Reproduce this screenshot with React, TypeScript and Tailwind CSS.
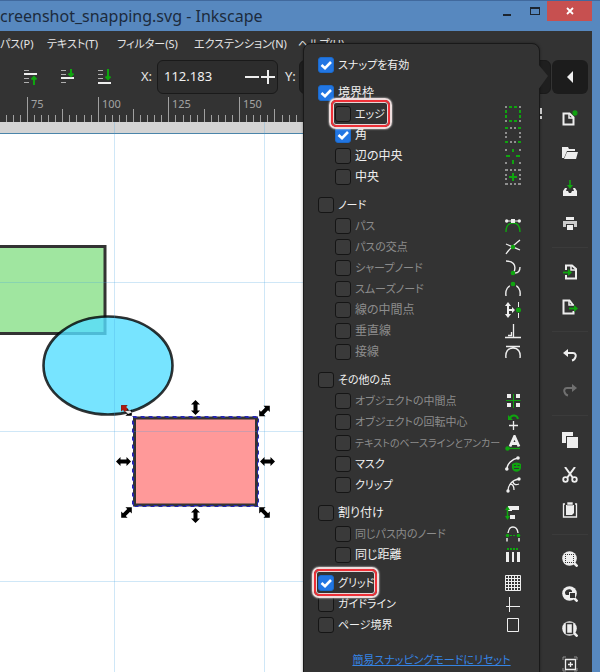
import React from "react";

const G = "#0fa50f";
const W = "#eeeeee";

function Svg({ children, label, className = "" }: { children: React.ReactNode; label?: string; className?: string }) {
  return (
    <svg width="16" height="16" viewBox="0 0 16 16" fill="none" aria-hidden={!label} aria-label={label} className={"shrink-0 " + className}>
      {children}
    </svg>
  );
}

const grey = "#8f8f8f";
const icons: Record<string, React.ReactNode> = {
  edge: (
    <>
      <path d="M4 1H7M9 1H12M4 15H7M9 15H12M1 4V7M1 9V12M15 4V7M15 9V12" stroke={G} strokeWidth="2" />
      <path d="M0 0h2v2H0zM14 0h2v2h-2zM0 14h2v2H0zM14 14h2v2h-2z" fill={grey} />
    </>
  ),
  corner: (
    <>
      <path d="M5 1H7M9 1H11M5 15H7M9 15H11M1 5V7M1 9V11M15 5V7M15 9V11" stroke={grey} strokeWidth="2" />
      <path d="M0 0h3v2H0zM13 0h3v2h-3zM0 14h3v2H0zM13 14h3v2h-3z" fill={G} />
    </>
  ),
  mid: (
    <>
      <path d="M8 1V4M8 12V16M1 8H5M11 8H15" stroke={G} strokeWidth="2" />
      <path d="M0 1h2v2H0zM14 1h2v2h-2zM0 14h2v2H0zM14 14h2v2h-2z" fill={grey} />
    </>
  ),
  center: (
    <>
      <path d="M8 4V12M4 8H12" stroke={G} strokeWidth="2" />
      <path d="M5 1H7M9 1H11M5 15H7M9 15H11M1 5V7M1 9V11M15 5V7M15 9V11" stroke={grey} strokeWidth="2" />
      <path d="M0 0h3v2H0zM13 0h3v2h-3zM0 14h3v2H0zM13 14h3v2h-3z" fill={grey} />
    </>
  ),
  path: (
    <>
      <path d="M1 14C1 9 3 5 8 5S15 9 15 14" stroke={G} strokeWidth="1.4" />
      <path d="M2 3H14" stroke={W} />
      <path d="M6 1h4v4H6z" fill={W} />
      <circle cx="1.7" cy="3" r="1.7" fill={W} /><circle cx="14.3" cy="3" r="1.7" fill={W} />
    </>
  ),
  cross: (
    <>
      <path d="M1 15C4 10 8 7 15 1M1 5C5 7 9 8 15 11" stroke={W} strokeWidth="1.3" />
      <circle cx="8" cy="8" r="2.2" fill={G} />
    </>
  ),
  cusp: (
    <>
      <path d="M1 1C7 1 12 4 9 12M10 13C14 13 15 10 15 7" stroke={W} strokeWidth="1.4" />
      <circle cx="8" cy="13" r="2.3" fill={G} />
    </>
  ),
  smooth: (
    <>
      <path d="M1 15C0 9 3 4 8 4S16 9 15 15" stroke={W} strokeWidth="1.4" />
      <circle cx="8" cy="4" r="3.4" fill="#333" />
      <circle cx="8" cy="3" r="2.3" fill={G} />
    </>
  ),
  lineMid: (
    <>
      <path d="M3 2V14M3 8H9" stroke={W} strokeWidth="2" />
      <path d="M0 4L3 0L6 4zM0 12L3 16L6 12zM7 5L10 8L7 11z" fill={W} />
      <path d="M13.5 0V5M13.5 11V16" stroke={W} />
      <circle cx="13.5" cy="8" r="2.5" fill={G} />
    </>
  ),
  perp: <path d="M0 14.5H16M8.5 1V14M3 12.5H6.5V9" stroke={W} strokeWidth="1.3" />,
  tangent: <path d="M1 2.5H15M1 14C0 8 3 4 8 4S16 8 15 14" stroke={W} strokeWidth="1.4" />,
  objMid: (
    <>
      <path d="M2 1h4v4H2zM11 1h4v4h-4zM2 10h4v4H2zM11 10h4v4h-4z" fill={W} />
      <path d="M8.5 1V15M1 7.5H15.5" stroke={G} />
    </>
  ),
  rotate: (
    <>
      <path d="M8.5 7V16M4 11.5H13" stroke={W} strokeWidth="1.3" />
      <path d="M5 4C7 0 12 1 13 5" stroke={G} strokeWidth="2" />
      <path d="M3 1V6H8z" fill={G} />
    </>
  ),
  baseline: (
    <>
      <path d="M2 13.5H15" stroke={G} strokeWidth="1.3" />
      <circle cx="2.5" cy="13.5" r="2.2" fill={G} />
      <path d="M5 11.5L9.5 1.5L14 11.5M7 8.5H12" stroke={W} strokeWidth="2.8" />
    </>
  ),
  mask: (
    <>
      <path d="M2 13C2 8 7 3 13 2" stroke={W} strokeWidth="1.4" />
      <circle cx="1.8" cy="13" r="1.8" fill={W} /><circle cx="13" cy="2" r="1.8" fill={W} />
      <path d="M7 8C10 6 13 6 16 8V12C15 17 8 17 7 12z" fill={G} />
      <path d="M9 9.5H11M12.5 9.5H14.5M9 12.5H14" stroke="#333" strokeWidth="1" />
    </>
  ),
  clip: (
    <>
      <path d="M3 14C3 8 7 3 14 2M5 7C8 7 9 9 9 13M8 4C8 8 11 8 14 7" stroke={W} strokeWidth="1.3" />
      <circle cx="3" cy="14" r="1.7" fill={W} /><circle cx="14" cy="2" r="1.7" fill={W} />
    </>
  ),
  align: (
    <>
      <path d="M3 1H14V5H7V6H3zM5 10H10V14H5z" fill={W} />
      <path d="M2.5 4V13" stroke={G} strokeWidth="1.5" />
      <path d="M0 5L2.5 1L5 5zM0 11L2.5 15L5 11z" fill={G} />
    </>
  ),
  selfAlign: (
    <>
      <path d="M3 7C4 -1 12 -1 13 7" stroke={W} strokeWidth="1.4" />
      <path d="M2 12V15.5M14 12V15.5" stroke={W} strokeWidth="1.4" />
      <path d="M5 9.5H11" stroke={G} strokeDasharray="2 1" />
      <circle cx="2.5" cy="9.5" r="1.8" fill={G} /><circle cx="13.5" cy="9.5" r="1.8" fill={G} />
    </>
  ),
  dist: (
    <>
      <path d="M1 5h3v10H1zM7 5h2v10H7zM12 5h3v10h-3z" fill={W} />
      <path d="M2 2H14" stroke={G} strokeWidth="2" strokeDasharray="2 1" />
    </>
  ),
  grid: <path d="M.5 .5H15.5V15.5H.5zM3.5 0V16M6.5 0V16M9.5 0V16M12.5 0V16M0 3.5H16M0 6.5H16M0 9.5H16M0 12.5H16" stroke={W} />,
  guide: <path d="M4.5 1V16M1 10.5H15" stroke={W} />,
  page: <path d="M2.5 1.5H13.5V14.5H2.5z" stroke={W} />,
};

type Item = {
  id: string;
  label: string;
  size: "text-[12px]" | "text-[11px]" | "text-[10px]";
  sub?: boolean;
  on?: boolean;
  off?: boolean;
  icon?: string;
  gap?: boolean;
  mark?: "edge" | "grid";
};

const items: Item[] = [
  { id: "enable", label: "スナップを有効", size: "text-[11px]", on: true },
  { id: "bbox", label: "境界枠", size: "text-[12px]", on: true, gap: true },
  { id: "edge", label: "エッジ", size: "text-[11px]", sub: true, icon: "edge", mark: "edge" },
  { id: "corner", label: "角", size: "text-[12px]", sub: true, on: true, icon: "corner" },
  { id: "mid", label: "辺の中央", size: "text-[12px]", sub: true, icon: "mid" },
  { id: "center", label: "中央", size: "text-[12px]", sub: true, icon: "center" },
  { id: "nodes", label: "ノード", size: "text-[11px]", gap: true },
  { id: "path", label: "パス", size: "text-[11px]", sub: true, off: true, icon: "path" },
  { id: "cross", label: "パスの交点", size: "text-[11px]", sub: true, off: true, icon: "cross" },
  { id: "cusp", label: "シャープノード", size: "text-[11px]", sub: true, off: true, icon: "cusp" },
  { id: "smooth", label: "スムーズノード", size: "text-[11px]", sub: true, off: true, icon: "smooth" },
  { id: "linemid", label: "線の中間点", size: "text-[12px]", sub: true, off: true, icon: "lineMid" },
  { id: "perp", label: "垂直線", size: "text-[12px]", sub: true, off: true, icon: "perp" },
  { id: "tangent", label: "接線", size: "text-[12px]", sub: true, off: true, icon: "tangent" },
  { id: "others", label: "その他の点", size: "text-[11px]", gap: true },
  { id: "objmid", label: "オブジェクトの中間点", size: "text-[11px]", sub: true, off: true, icon: "objMid" },
  { id: "rotate", label: "オブジェクトの回転中心", size: "text-[11px]", sub: true, off: true, icon: "rotate" },
  { id: "baseline", label: "テキストのベースラインとアンカー", size: "text-[10px]", sub: true, off: true, icon: "baseline" },
  { id: "mask", label: "マスク", size: "text-[11px]", sub: true, icon: "mask" },
  { id: "clip", label: "クリップ", size: "text-[11px]", sub: true, icon: "clip" },
  { id: "align", label: "割り付け", size: "text-[12px]", gap: true, icon: "align" },
  { id: "self", label: "同じパス内のノード", size: "text-[11px]", sub: true, off: true, icon: "selfAlign" },
  { id: "dist", label: "同じ距離", size: "text-[12px]", sub: true, icon: "dist" },
  { id: "grid", label: "グリッド", size: "text-[11px]", on: true, gap: true, icon: "grid", mark: "grid" },
  { id: "guide", label: "ガイドライン", size: "text-[11px]", icon: "guide" },
  { id: "page", label: "ページ境界", size: "text-[11px]", icon: "page" },
];

function Mark({ kind }: { kind: "edge" | "grid" }) {
  const place = kind === "edge" ? "left-[25px] w-[63px]" : "left-[8px] w-[67px]";
  return (
    <span className={"pointer-events-none absolute -top-[6px] z-10 h-[31px] rounded-[7px] border-2 border-[#eedede] shadow-[0_0_2px_#ffffff] " + place}>
      <span className="block h-full rounded-[5px] border-2 border-[#ee3038]">
        <span className="block h-full rounded-[3px] border border-[#e6d6d6]" />
      </span>
    </span>
  );
}

function SnapRow({ item }: { item: Item }) {
  return (
    <li className={"relative flex h-[21px] items-center pb-[2px] pr-[18px] " + (item.gap ? "mt-[7px] " : "") + (item.sub ? "pl-[31px]" : "pl-[14px]")}>
      {item.mark && <Mark kind={item.mark} />}
      <span className="grid shrink-0">
        <input
          id={item.id}
          type="checkbox"
          defaultChecked={item.on}
          disabled={item.off}
          className="peer col-start-1 row-start-1 size-4 appearance-none rounded-[3px] border border-[#151515] bg-[#3a3a3a] checked:border-[#1b6acb] checked:bg-[#2276e3]"
        />
        <svg viewBox="0 0 16 16" className="pointer-events-none invisible col-start-1 row-start-1 size-4 peer-checked:visible" aria-hidden="true">
          <path d="M3.5 8L7 11.2L13 5" fill="none" stroke="#ffffff" strokeWidth="2.6" />
        </svg>
      </span>
      <label
        htmlFor={item.id}
        className={"ml-1 grow whitespace-nowrap leading-4 " + item.size + (item.off ? " text-[#8c8c8c]" : " text-[#f0f0f0]") + (item.mark ? " relative z-20" : "")}
      >
        {item.label}
      </label>
      {item.icon && <Svg>{icons[item.icon]}</Svg>}
    </li>
  );
}

const commands: ({ name: string; art: React.ReactNode } | null)[] = [
  { name: "新規", art: (<><path d="M1.5 3.5H7.5L11.5 7.5V14.5H1.5z" stroke={W} strokeWidth="2" /><path d="M7 3V8H12" stroke={W} strokeWidth="1.5" /><path d="M13 0V6M10 3H16M11 1L15 5M15 1L11 5" stroke={G} strokeWidth="1.2" /></>) },
  { name: "開く", art: (<><path d="M0 2H6L7 4H13V6H5L2 13H0z" fill={W} /><path d="M5 7H16L14 14H2z" fill={W} /></>) },
  { name: "保存", art: (<><path d="M8 0V7" stroke={G} strokeWidth="1.6" /><path d="M5 5H11L8 9z" fill={G} /><path d="M1 11L3 8H5L4 11H6L7 13H9L10 11H12L11 8H13L15 11V16H1z" fill={W} /></>) },
  { name: "印刷", art: (<><path d="M4 2H12V5H4z" fill={W} /><path d="M1 6H15V12H12V9H4V12H1z" fill="#cccccc" /><path d="M5 10H11V15H5z" fill={W} /></>) },
  null,
  { name: "インポート", art: (<><path d="M4 6V1.5H10L14 5V14.5H4V11" stroke={W} strokeWidth="2" /><path d="M9 2V6H14" stroke={W} strokeWidth="1.5" /><path d="M1 8.5H8" stroke={G} strokeWidth="1.8" /><path d="M6 5V12L10 8.5z" fill={G} /></>) },
  { name: "エクスポート", art: (<><path d="M11 6L7.5 1.5H1.5V14.5H11.5V12" stroke={W} strokeWidth="2" /><path d="M7 2V6H12" stroke={W} strokeWidth="1.5" /><path d="M7 9.5H13" stroke={G} strokeWidth="1.8" /><path d="M12 6V13L16 9.5z" fill={G} /></>) },
  null,
  { name: "元に戻す", art: (<><path d="M4 5H11C14 5 14 8 13.5 9C13 11 12 12 10 12.5" stroke={W} strokeWidth="2" /><path d="M6 1V9L1 5z" fill={W} /></>) },
  { name: "やり直す", art: (<><path d="M12 5H5C2 5 2 8 2.5 9C3 11 4 12 6 12.5" stroke="#707070" strokeWidth="2" /><path d="M10 1V9L15 5z" fill="#707070" /></>) },
  null,
  { name: "コピー", art: (<><path d="M0 0H11V4H4V11H0z" fill={W} /><path d="M5 5H16V16H5z" fill={W} /></>) },
  { name: "切り取り", art: (<><path d="M3 0L11 11M13 0L5 11" stroke={W} strokeWidth="2" /><circle cx="3.5" cy="12.5" r="2.3" stroke={W} strokeWidth="1.8" /><circle cx="12.5" cy="12.5" r="2.3" stroke={W} strokeWidth="1.8" /></>) },
  { name: "貼り付け", art: (<><path d="M1.5 2H14.5V15H1.5z" stroke={W} strokeWidth="1.3" /><path d="M3 1H13V12L11 14H3z" fill="#333" /><path d="M4 3H12V11L10 13H4z" fill={W} /><path d="M5 0H11V3H5z" fill={W} stroke="#333" strokeWidth=".6" /></>) },
  null,
  { name: "選択範囲にズーム", art: (<><circle cx="7.5" cy="7.5" r="7.3" fill={W} /><path d="M12 12L15.5 15.5" stroke={W} strokeWidth="2.5" /><path d="M3.5 3V12M11.5 3V12M3 3.5H12M3 11.5H12" stroke="#333" strokeDasharray="1 1" /></>) },
  { name: "描画全体にズーム", art: (<><circle cx="7.5" cy="7.5" r="7.3" fill={W} /><path d="M12 12L15.5 15.5" stroke={W} strokeWidth="2.5" /><path d="M3 6C4 3 9 2 10 5V6H7V9H4C3 8 3 7 3 6zM8 7H13V12H8z" fill="#333" /></>) },
  { name: "ページにズーム", art: (<><circle cx="7.5" cy="7.5" r="7.3" fill={W} /><path d="M12 12L15.5 15.5" stroke={W} strokeWidth="2.5" /><path d="M4.5 2.5H10.5V12.5H4.5z" stroke="#333" strokeWidth="1.4" /></>) },
  { name: "ページを中央に", art: (<><path d="M1 4V1H4M12 1H15V4M1 12V15H4M12 15H15V12" stroke={grey} /><path d="M3.5 3.5H13.5V13.5H3.5zM8.5 6V11M6 8.5H11" stroke={W} strokeWidth="1.3" /></>) },
];

const ticks = Array.from({ length: 90 }, (_, i) => ({ x: Math.round(28 + (i - 4) * 7.07) - 0.5, n: i - 4 }));

function Ruler() {
  return (
    <svg className="block h-[26px] w-full bg-[#333333]" aria-hidden="true">
      {ticks.map((t) => (
        <path key={t.n} d={`M${t.x} ${t.n % 10 === 0 ? 1 : t.n % 5 === 0 ? 13 : 19}V26`} stroke="#a0a0a0" />
      ))}
      {[75, 100, 125, 150].map((v, i) => (
        <text key={v} x={Math.round(31 + i * 70.7)} y="12" fill="#a3a3a3" className="text-[11px]">{v}</text>
      ))}
    </svg>
  );
}

const arrow = "M-7.5 0L-3 -4.5V-2H3V-4.5L7.5 0L3 4.5V2H-3V4.5z";
const handles: [number, number, number][] = [
  [195.5, 407.5, 90], [264.5, 411, -45], [123.5, 461.5, 0], [267.5, 461.5, 0],
  [126.5, 512.5, -45], [195.5, 515.5, 90], [264.5, 512.5, 45], [126.5, 410.5, 45],
];

function Canvas() {
  return (
    <svg className="block min-h-0 w-full grow bg-white" role="img" aria-label="キャンバス">
      <g transform="translate(0 -122)">
        <rect x="0" y="122" width="100%" height="11" fill="#d4d4d4" />
        <path d="M0 133.5H4000" stroke="#4b85aa" />
        <rect x="-20" y="246.5" width="125" height="87" fill="#a0e6a0" stroke="#333333" strokeWidth="3" />
        <ellipse cx="108" cy="365.5" rx="64.5" ry="49" fill="#55ddff" fillOpacity=".8" stroke="#000000" strokeOpacity=".8" strokeWidth="2.6" />
        <rect x="134.5" y="418" width="122" height="87" fill="#ff9999" stroke="#333333" strokeWidth="3" />
        <path d="M114.5 122V1200M264.5 122V1200M0 282.5H4000M0 431.5H4000M0 581.5H4000" stroke="#3f9fdf" strokeOpacity=".25" />
        <rect x="132.5" y="416.5" width="126" height="90" fill="none" stroke="#2626b0" strokeDasharray="4 4" />
        <rect x="133.5" y="417.5" width="124" height="88" fill="none" stroke="#2626b0" strokeDasharray="4 4" />
        {handles.map(([x, y, r]) => (
          <path key={`${x}-${y}`} d={arrow} transform={`translate(${x} ${y}) rotate(${r})`} fill="#000000" />
        ))}
        <path d="M-7.5 0L-3 -4.5V-2H0V2H-3V4.5z" transform="translate(126.5 410.5) rotate(45)" fill="#b01c10" />
        <path d="M125 411L130 410.5L132 412.5L128 414z" fill="#e4e4e4" />
      </g>
    </svg>
  );
}

function OrderIcon({ kind }: { kind: "raise" | "lower" | "bottom" }) {
  const bar = kind === "raise" ? 5 : kind === "lower" ? 9 : 14;
  const art = kind === "raise" ? "M11 9V16M8.5 10.5L11 8L13.5 10.5" : kind === "lower" ? "M11 0V6M8.5 4.5L11 7L13.5 4.5" : "M11 0V9M8.5 7.5L11 10L13.5 7.5";
  return (
    <Svg className="block">
      <path d="M1 1.5H6M1 5.5H6M1 9.5H6M1 13.5H6" stroke="#b0b0b0" strokeWidth="1.2" />
      <path d={`M1 ${bar}H14`} stroke={W} strokeWidth="2" />
      <path d={art} stroke={G} strokeWidth="2" />
    </Svg>
  );
}

export default function App() {
  return (
    <div className="flex h-screen overflow-hidden border-t border-[#41699d] bg-[#5788bf] pr-2 font-['Noto_Sans','Noto_Sans_CJK_JP',sans-serif] [font-feature-settings:'palt']">
      <div className="relative flex min-w-0 grow flex-col">
        <header className="flex h-[30px] shrink-0 items-start justify-between">
          <h1 className="whitespace-nowrap pt-[3px] text-[16px] leading-6 text-[#1c2b3d]">creenshot_snapping.svg - Inkscape</h1>
          <div className="flex">
            <button aria-label="最小化" className="flex h-6 w-8 items-center justify-center"><span className="mt-1 h-[2px] w-2 bg-[#1c2530]" /></button>
            <button aria-label="最大化" className="flex h-5 w-6 items-center justify-center"><span className="h-2 w-[10px] border border-t-2 border-[#1c2530]" /></button>
            <button aria-label="閉じる" className="flex h-5 w-[45px] items-center justify-center bg-[#c75050]">
              <svg width="8" height="8" viewBox="0 0 8 8" aria-hidden="true"><path d="M1 1L7 7M7 1L1 7" stroke="#ffffff" strokeWidth="1.8" /></svg>
            </button>
          </div>
        </header>

        <nav className="flex h-[26px] shrink-0 items-center gap-4 overflow-hidden whitespace-nowrap bg-[#333333] text-[11px] text-[#e6e6e6]">
          <button className="flex w-[31px] shrink-0">パス(P)</button>
          <button className="w-[54px] shrink-0 text-left">テキスト(T)</button>
          <button className="w-[61px] shrink-0 text-left">フィルター(S)</button>
          <button className="w-[88px] shrink-0 text-left">エクステンション(N)</button>
          <button className="shrink-0 text-left">ヘルプ(H)</button>
        </nav>

        <div className="flex h-[39px] shrink-0 items-center bg-[#333333] pr-1 text-[13px] text-[#e6e6e6]">
          <div className="flex shrink-0 gap-[21px] pl-[23px]">
            <button aria-label="前面へ"><OrderIcon kind="raise" /></button>
            <button aria-label="背面へ"><OrderIcon kind="lower" /></button>
            <button aria-label="最背面へ"><OrderIcon kind="bottom" /></button>
          </div>
          <label htmlFor="pos-x" className="ml-7 w-4 shrink-0">X:</label>
          <div className="flex h-[34px] w-[121px] shrink-0 items-center rounded-md border border-[#1a1a1a] bg-[#2d2d2d] pl-[6px]">
            <input id="pos-x" defaultValue="112.183" className="w-20 bg-transparent text-[13px] text-[#f0f0f0] outline-none" />
            <button aria-label="減らす"><svg width="16" height="16" className="block"><path d="M1 8H15" stroke={W} strokeWidth="2" /></svg></button>
            <button aria-label="増やす"><svg width="16" height="16" className="block"><path d="M1 8H15M8 1V15" stroke={W} strokeWidth="2" /></svg></button>
          </div>
          <label htmlFor="pos-y" className="ml-[7px] w-[14px] shrink-0">Y:</label>
          <input id="pos-y" className="h-[34px] min-w-0 grow rounded-md border border-[#1a1a1a] bg-[#1f1f1f]" />
          <button aria-label="スナップ設定" className="ml-px flex h-[34px] w-[36px] shrink-0 items-center justify-center rounded-md bg-[#1c1c1c]">
            <svg width="8" height="12" aria-hidden="true"><path d="M7 0V12L1 6z" fill={W} /></svg>
          </button>
        </div>

        <div className="flex min-h-0 grow">
          <main className="flex min-w-0 grow flex-col">
            <Ruler />
            <Canvas />
          </main>
          <aside className="flex w-[52px] shrink-0 flex-col items-stretch overflow-hidden bg-[#333333] pl-2 pt-1">
            {commands.map((c, i) =>
              c ? (
                <button key={i} aria-label={c.name} className="flex h-[35px] shrink-0 items-center justify-center"><Svg>{c.art}</Svg></button>
              ) : (
                <hr key={i} className="mx-1 mb-[6px] mt-[7px] shrink-0 border-[#3b3b3b]" />
              )
            )}
          </aside>
        </div>

        <section aria-label="スナップ" className="absolute -bottom-2 right-[52px] top-[42px] w-[237px] rounded-t-lg border border-[#191919] bg-[#333333] pt-[11px] shadow-[0_0_3px_#00000060]">
          <svg className="absolute -right-[10px] top-[19px]" width="11" height="28" aria-hidden="true">
            <path d="M0 1L10 13L0 27z" fill="#333333" />
          </svg>
          <svg className="absolute -right-[3px] top-[64px]" width="3" height="12" aria-hidden="true">
            <path d="M2 0V6M2 8V11" stroke="#c8c8c8" strokeWidth="2" />
          </svg>
          <ul>
            {items.map((item) => <SnapRow key={item.id} item={item} />)}
          </ul>
          <p className="mt-[14px] pl-5 text-center text-[11px] leading-5">
            <a href="#reset" className="whitespace-nowrap text-[#3584e4] underline">簡易スナッピングモードにリセット</a>
          </p>
        </section>
      </div>
    </div>
  );
}
